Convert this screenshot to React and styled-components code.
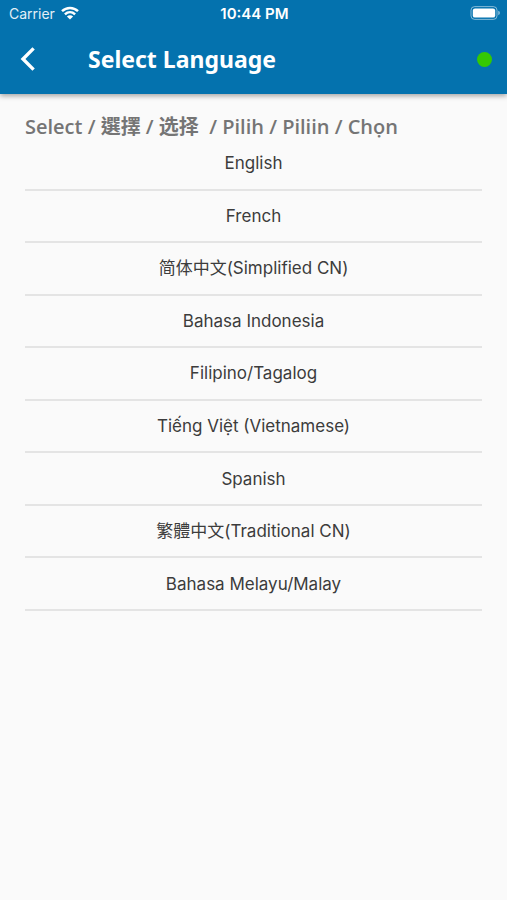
import { useState } from 'react';
import styled, { createGlobalStyle } from 'styled-components';

const languages = [
  { code: 'en', label: 'English' },
  { code: 'fr', label: 'French' },
  { code: 'zh-Hans', label: '简体中文(Simplified CN)' },
  { code: 'id', label: 'Bahasa Indonesia' },
  { code: 'fil', label: 'Filipino/Tagalog' },
  { code: 'vi', label: 'Tiếng Việt (Vietnamese)' },
  { code: 'es', label: 'Spanish' },
  { code: 'zh-Hant', label: '繁體中文(Traditional CN)' },
  { code: 'ms', label: 'Bahasa Melayu/Malay' },
];

export default function App() {
  const [language, setLanguage] = useState(null);

  return (
    <>
      <GlobalStyle />
      <Header>
        <StatusBar>
          <Carrier>
            Carrier
            <svg viewBox="0 0 18 14" width="18" height="14" aria-hidden="true">
              <g fill="none" stroke="#fff" strokeWidth="2.5">
                <path d="M1 5.2C5.6 .9 12.4 .9 17 5.2" />
                <path d="M3.9 8.3C6.9 5.5 11.1 5.5 14.1 8.3" />
              </g>
              <path d="M9 13.6L5.9 10.4C7.7 8.9 10.3 8.9 12.1 10.4Z" fill="#fff" />
            </svg>
          </Carrier>
          <Clock>10:44 PM</Clock>
          <Battery>
            <svg viewBox="0 0 30 14" width="30" height="14" aria-hidden="true">
              <rect
                x="1"
                y=".6"
                width="26"
                height="12.8"
                rx="3.6"
                fill="none"
                stroke="#fff"
                strokeOpacity=".5"
              />
              <rect x="2.8" y="2.4" width="22.4" height="9.2" rx="2.2" fill="#fff" />
              <path d="M28.2 4.8q1.8 .6 1.8 2.2T28.2 9.2z" fill="#fff" fillOpacity=".5" />
            </svg>
          </Battery>
        </StatusBar>
        <Toolbar>
          <BackButton type="button" aria-label="Back">
            <svg viewBox="0 0 16 24" width="16" height="24" aria-hidden="true">
              <path
                d="M13.6 1.4L3 12L13.6 22.6"
                fill="none"
                stroke="#fff"
                strokeWidth="3.4"
              />
            </svg>
          </BackButton>
          <Title>Select Language</Title>
          <OnlineDot role="img" aria-label="Online" />
        </Toolbar>
      </Header>
      <Content>
        <Heading>Select / 選擇 / 选择&nbsp; / Pilih / Piliin / Chọn</Heading>
        <LanguageList>
          {languages.map(({ code, label }) => (
            <LanguageItem key={code}>
              <LanguageButton
                type="button"
                lang={code}
                aria-pressed={language === code}
                onClick={() => setLanguage(code)}
              >
                {label}
              </LanguageButton>
            </LanguageItem>
          ))}
        </LanguageList>
      </Content>
    </>
  );
}

const GlobalStyle = createGlobalStyle`
  * {
    box-sizing: border-box;
    margin: 0;
    padding: 0;
  }
  body {
    background: #fafafa;
    color: #3c3c3c;
    font-family: Inter, "Noto Sans CJK SC", sans-serif;
  }
  svg {
    display: block;
  }
`;

const Header = styled.header`
  padding-bottom: 2px;
  background: #0472ae;
  color: #fff;
  box-shadow: 0 2px 5px rgba(0, 0, 0, 0.35);
`;

const StatusBar = styled.div`
  display: grid;
  grid-template-columns: 1fr auto 1fr;
  align-items: center;
  height: 26px;
  padding: 0 7px 0 9px;
  font-size: 14px;
`;

const Carrier = styled.div`
  display: flex;
  align-items: center;
  gap: 6px;
  color: #e3eff6;
`;

const Clock = styled.time`
  font-size: 15px;
  font-weight: 600;
`;

const Battery = styled.div`
  justify-self: end;
`;

const Toolbar = styled.div`
  display: flex;
  align-items: center;
  height: 66px;
  padding: 0 15px 0 20px;
`;

const BackButton = styled.button`
  width: 68px;
  border: 0;
  background: none;
  cursor: pointer;
`;

const Title = styled.h1`
  flex: 1;
  font-family: 'Noto Sans', sans-serif;
  font-size: 23px;
  line-height: 32px;
  font-weight: 700;
`;

const OnlineDot = styled.span`
  width: 15px;
  height: 15px;
  border-radius: 50%;
  background: #35c803;
`;

const Content = styled.main`
  padding: 22px 25px;
`;

const Heading = styled.h2`
  color: #757575;
  font-family: 'Open Sans', 'Noto Sans CJK TC', sans-serif;
  font-size: 20px;
  line-height: 22px;
  font-weight: 600;
`;

const LanguageList = styled.ul`
  display: grid;
  grid-auto-rows: 1fr;
  min-height: 473px;
  list-style: none;
`;

const LanguageItem = styled.li`
  display: flex;
  border-bottom: 2px solid #e4e4e4;
`;

const LanguageButton = styled.button`
  flex: 1;
  border: 0;
  background: none;
  color: inherit;
  font-family: inherit;
  font-size: 17px;
  line-height: 24px;
  cursor: pointer;
`;
